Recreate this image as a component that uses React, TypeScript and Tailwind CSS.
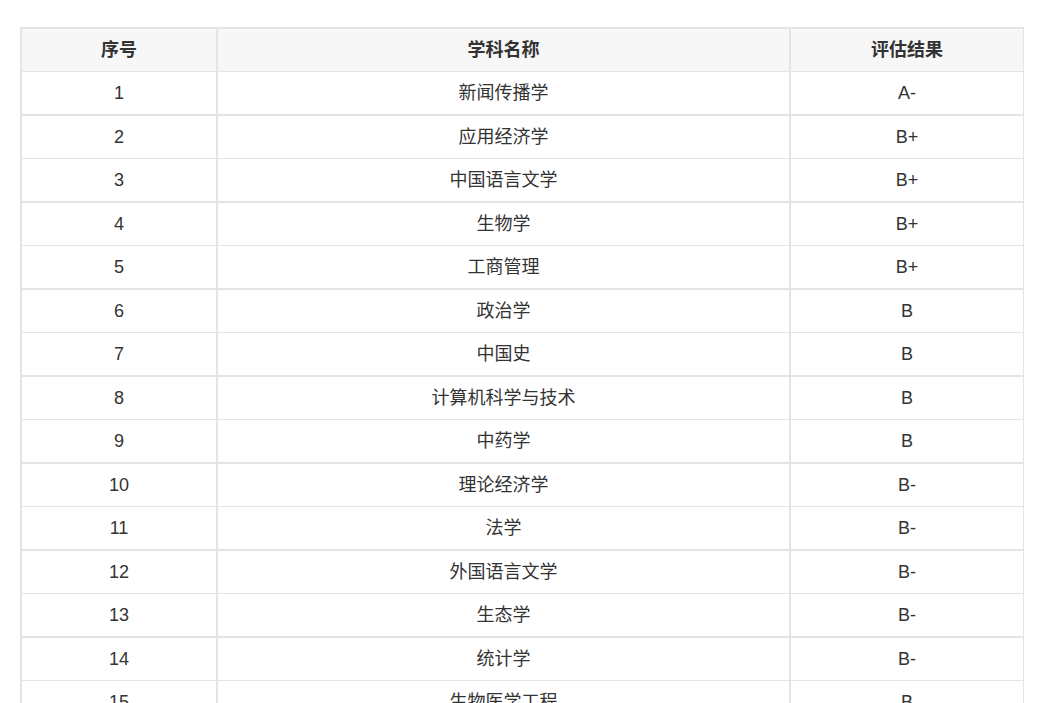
const rows = [
  { no: "1", name: "新闻传播学", grade: "A-" },
  { no: "2", name: "应用经济学", grade: "B+" },
  { no: "3", name: "中国语言文学", grade: "B+" },
  { no: "4", name: "生物学", grade: "B+" },
  { no: "5", name: "工商管理", grade: "B+" },
  { no: "6", name: "政治学", grade: "B" },
  { no: "7", name: "中国史", grade: "B" },
  { no: "8", name: "计算机科学与技术", grade: "B" },
  { no: "9", name: "中药学", grade: "B" },
  { no: "10", name: "理论经济学", grade: "B-" },
  { no: "11", name: "法学", grade: "B-" },
  { no: "12", name: "外国语言文学", grade: "B-" },
  { no: "13", name: "生态学", grade: "B-" },
  { no: "14", name: "统计学", grade: "B-" },
  { no: "15", name: "生物医学工程", grade: "B" },
];

export default function App() {
  return (
    <div
      className="bg-white min-h-screen pt-[27px] pl-[20px] pb-10 text-[#333] text-[18px]"
      style={{ fontFamily: '"Liberation Sans", "Noto Sans CJK SC", sans-serif' }}
    >
      <div className="w-[1004px] border-t-2 border-l-2 border-r border-[#e4e4e4]">
        <div className="flex h-[43px] bg-[#f7f7f7] border-b border-[#e4e4e4] font-bold">
          <div className="w-[196px] flex items-center justify-center border-r-2 border-[#e4e4e4]">序号</div>
          <div className="w-[573px] flex items-center justify-center border-r-2 border-[#e4e4e4]">学科名称</div>
          <div className="flex-1 flex items-center justify-center">评估结果</div>
        </div>
        {rows.map((r, i) => (
          <div
            key={r.no}
            className={
              i % 2 === 0
                ? "flex h-[44px] border-b-2 border-[#e4e4e4]"
                : "flex h-[43px] border-b border-[#e4e4e4]"
            }
          >
            <div className="w-[196px] flex items-center justify-center border-r-2 border-[#e4e4e4]">{r.no}</div>
            <div className="w-[573px] flex items-center justify-center border-r-2 border-[#e4e4e4]">{r.name}</div>
            <div className="flex-1 flex items-center justify-center">{r.grade}</div>
          </div>
        ))}
      </div>
    </div>
  );
}
